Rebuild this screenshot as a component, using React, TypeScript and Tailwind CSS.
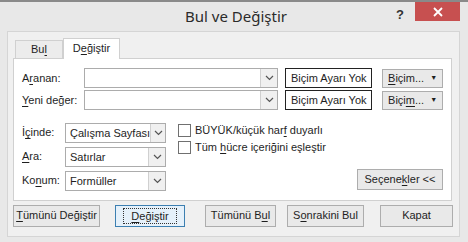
import React from 'react';

const font = { fontFamily: '"Liberation Sans", Arial, sans-serif' };

// small chevron used in combo boxes
const Chevron = () => (
  <svg width="9" height="6" viewBox="0 0 9 6">
    <path d="M1 1 L4.5 4.5 L8 1" fill="none" stroke="#555" strokeWidth="1.2" />
  </svg>
);

const U = ({ children }: { children: React.ReactNode }) => <span className="underline underline-offset-2">{children}</span>;

const Combo = ({ text, w }: { text?: string; w: string }) => (
  <div className={`${w} h-[20px] flex bg-white border border-[#acacac]`}>
    <div className="flex-1 pl-[4px] leading-[18px] text-[11px] text-[#1e1e1e] whitespace-nowrap">{text}</div>
    <div className="w-[17px] flex items-center justify-center bg-[#f0f0f0] border-l border-[#d0d0d0]">
      <Chevron />
    </div>
  </div>
);

const Btn = ({ children, w, focus }: { children: React.ReactNode; w: string; focus?: boolean }) => (
  <div
    className={`${w} h-[22px] flex items-center justify-center text-[11px] text-[#1e1e1e] border whitespace-nowrap ${
      focus ? 'border-[#3c7fb1] bg-[#e5f1fb]' : 'border-[#adadad] bg-[#e9e9e9]'
    }`}
  >
    <span className={`block h-[16px] leading-[14px] px-[7px] ${focus ? 'border border-dotted border-[#333]' : ''}`}>
      {children}
    </span>
  </div>
);

const Check = ({ children }: { children: React.ReactNode }) => (
  <div className="flex items-center gap-[4px] h-[17px] text-[11px] text-[#1e1e1e] whitespace-nowrap">
    <div className="w-[13px] h-[13px] bg-white border border-[#707070]" />
    <span>{children}</span>
  </div>
);

export default function App() {
  return (
    <div className="w-[468px] h-[242px] bg-[#e8e8e8] border-t-2 border-[#8a8a8a] overflow-hidden" style={font}>
      {/* title bar */}
      <div className="h-[29px] flex items-center relative">
        <div className="flex-1 text-center text-[15px] text-[#2b2b2b] pl-[4px]" style={{ fontFamily: '"Noto Sans", sans-serif' }}>
          Bul ve Değiştir
        </div>
        <div className="absolute right-[8px] top-0 flex items-start">
          <div className="w-[30px] text-center text-[13px] font-bold text-[#333] mt-[3px]">?</div>
          <div className="w-[45px] h-[19px] bg-[#c75050] flex items-center justify-center">
            <svg width="10" height="10" viewBox="0 0 10 10">
              <path d="M1 1 L9 9 M9 1 L1 9" stroke="white" strokeWidth="1.8" />
            </svg>
          </div>
        </div>
      </div>

      {/* client area */}
      <div className="ml-[7px] w-[453px] h-[206px] border border-[#d5d5d5] bg-[#f0f0f0] px-[5px]">
        {/* tabs */}
        <div className="flex items-end h-[26px] pl-[2px] text-[11px] text-[#1e1e1e]">
          <div className="w-[48px] h-[18px] border border-b-0 border-[#d0d0d0] bg-[#ececec] text-center leading-[17px]">
            Bu<U>l</U>
          </div>
          <div className="w-[57px] h-[21px] border border-b-0 border-[#d0d0d0] bg-white text-center leading-[19px] relative top-[1px] z-10">
            D<U>e</U>ğiştir
          </div>
        </div>

        {/* panel */}
        <div className="w-[439px] h-[143px] bg-white border border-[#d0d0d0] pt-[9px] pl-[8px] pr-[8px] text-[11px] text-[#1e1e1e] whitespace-nowrap">
          <div className="flex items-center h-[20px]">
            <div className="w-[62px]">A<U>r</U>anan:</div>
            <Combo w="w-[195px]" />
            <div className="ml-[7px] w-[87px] h-[20px] border-[1.5px] border-[#222] flex items-center justify-center">Biçim Ayarı Yok</div>
            <div className="ml-[10px] w-[61px] h-[19px] bg-[#e9e9e9] border border-[#adadad] flex items-center justify-center gap-[6px]">
              <span><U>B</U>içim...</span>
              <span className="text-[7px]">▼</span>
            </div>
          </div>
          <div className="flex items-center h-[20px] mt-[2px]">
            <div className="w-[62px]"><U>Y</U>eni değer:</div>
            <Combo w="w-[195px]" />
            <div className="ml-[7px] w-[87px] h-[20px] border-[1.5px] border-[#222] flex items-center justify-center">Biçim Ayarı Yok</div>
            <div className="ml-[10px] w-[61px] h-[19px] bg-[#e9e9e9] border border-[#adadad] flex items-center justify-center gap-[6px]">
              <span>Biçi<U>m</U>...</span>
              <span className="text-[7px]">▼</span>
            </div>
          </div>

          <div className="flex mt-[12px]">
            <div className="flex flex-col gap-[3px]">
              <div className="flex items-center h-[21px]">
                <div className="w-[43px]">İ<U>ç</U>inde:</div>
                <Combo w="w-[101px]" text="Çalışma Sayfası" />
              </div>
              <div className="flex items-center h-[21px]">
                <div className="w-[43px]"><U>A</U>ra:</div>
                <Combo w="w-[101px]" text="Satırlar" />
              </div>
              <div className="flex items-center h-[21px]">
                <div className="w-[43px]">Ko<U>n</U>um:</div>
                <Combo w="w-[101px]" text="Formüller" />
              </div>
            </div>
            <div className="ml-[12px] flex flex-col">
              <Check>BÜYÜK/küçük har<U>f</U> duyarlı</Check>
              <Check>Tüm <U>h</U>ücre içeriğini eşleştir</Check>
            </div>
            <div className="flex-1 flex items-end justify-end">
              <div className="w-[86px] h-[21px] mb-[1px] bg-[#e9e9e9] border border-[#adadad] flex items-center justify-center">
                <span>Seçene<U>k</U>ler &lt;&lt;</span>
              </div>
            </div>
          </div>
        </div>

        {/* bottom buttons */}
        <div className="flex items-center mt-[4px] h-[22px]">
          <Btn w="w-[87px]"><U>T</U>ümünü Değiştir</Btn>
          <div className="ml-[15px]"><Btn w="w-[70px]" focus><U>D</U>eğiştir</Btn></div>
          <div className="ml-[20px]"><Btn w="w-[71px]">Tümünü B<U>u</U>l</Btn></div>
          <div className="ml-[11px]"><Btn w="w-[77px]">S<U>o</U>nrakini Bul</Btn></div>
          <div className="ml-[16px]"><Btn w="w-[73px]">Kapat</Btn></div>
        </div>
      </div>
    </div>
  );
}
